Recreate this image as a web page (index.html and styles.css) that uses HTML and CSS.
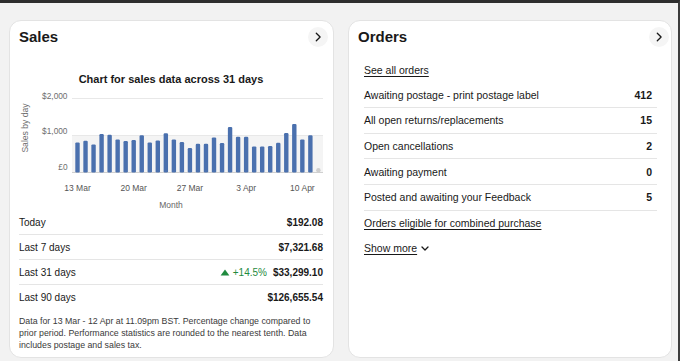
FILE: index.html
```html
<!DOCTYPE html>
<html lang="en">
<head>
<meta charset="utf-8">
<title>Seller Hub overview</title>
<link rel="stylesheet" href="styles.css">
</head>
<body>
<main class="page">
  <section class="card sales">
    <header class="card-head">
      <h2 class="card-title">Sales</h2>
      <button class="chev-btn" aria-label="Go to Sales"><svg viewBox="0 0 20 20"><path d="M8.3 6.2l3.8 3.8-3.8 3.8"/></svg></button>
    </header>
    <h3 class="chart-title">Chart for sales data across 31 days</h3>
    <svg class="chart" width="304" height="124" viewBox="0 0 304 124">
      <rect class="band" x="53" y="49" width="251" height="37"/>
      <line class="grid" x1="53" y1="12.5" x2="304" y2="12.5"/>
      <line class="grid" x1="53" y1="49.5" x2="304" y2="49.5"/>
      <line class="axis" x1="53" y1="86.5" x2="304" y2="86.5"/>
      <text class="ylab" x="48.5" y="13">$2,000</text>
      <text class="ylab" x="48.5" y="48">$1,000</text>
      <text class="ylab" x="48.5" y="84">£0</text>
      <text class="ytitle" transform="translate(9 42) rotate(-90)">Sales by day</text>
      <g class="bars">
        <rect x="56.3" y="56.4" width="4.4" height="30.1" rx="1.2"/>
        <rect x="64.33" y="54.7" width="4.4" height="31.8" rx="1.2"/>
        <rect x="72.36" y="58.4" width="4.4" height="28.1" rx="1.2"/>
        <rect x="80.39" y="48.0" width="4.4" height="38.5" rx="1.2"/>
        <rect x="88.42" y="48.7" width="4.4" height="37.8" rx="1.2"/>
        <rect x="96.45" y="53.4" width="4.4" height="33.1" rx="1.2"/>
        <rect x="104.48" y="55.1" width="4.4" height="31.4" rx="1.2"/>
        <rect x="112.51" y="54.0" width="4.4" height="32.5" rx="1.2"/>
        <rect x="120.54" y="49.3" width="4.4" height="37.2" rx="1.2"/>
        <rect x="128.57" y="56.4" width="4.4" height="30.1" rx="1.2"/>
        <rect x="136.6" y="54.4" width="4.4" height="32.1" rx="1.2"/>
        <rect x="144.63" y="47.3" width="4.4" height="39.2" rx="1.2"/>
        <rect x="152.66" y="53.4" width="4.4" height="33.1" rx="1.2"/>
        <rect x="160.69" y="56.1" width="4.4" height="30.4" rx="1.2"/>
        <rect x="168.72" y="62.1" width="4.4" height="24.4" rx="1.2"/>
        <rect x="176.75" y="57.7" width="4.4" height="28.8" rx="1.2"/>
        <rect x="184.78" y="57.7" width="4.4" height="28.8" rx="1.2"/>
        <rect x="192.81" y="51.4" width="4.4" height="35.1" rx="1.2"/>
        <rect x="200.84" y="57.1" width="4.4" height="29.4" rx="1.2"/>
        <rect x="208.87" y="40.9" width="4.4" height="45.6" rx="1.2"/>
        <rect x="216.9" y="50.7" width="4.4" height="35.8" rx="1.2"/>
        <rect x="224.93" y="50.7" width="4.4" height="35.8" rx="1.2"/>
        <rect x="232.96" y="60.4" width="4.4" height="26.1" rx="1.2"/>
        <rect x="240.99" y="60.4" width="4.4" height="26.1" rx="1.2"/>
        <rect x="249.02" y="60.1" width="4.4" height="26.4" rx="1.2"/>
        <rect x="257.05" y="56.8" width="4.4" height="29.7" rx="1.2"/>
        <rect x="265.08" y="47.0" width="4.4" height="39.5" rx="1.2"/>
        <rect x="273.11" y="37.9" width="4.4" height="48.6" rx="1.2"/>
        <rect x="281.14" y="53.4" width="4.4" height="33.1" rx="1.2"/>
        <rect x="289.17" y="49.3" width="4.4" height="37.2" rx="1.2"/>
      </g>
      <circle class="today-dot" cx="299.4" cy="84.2" r="2.2"/>
      <text class="xlab" x="58.5" y="105">13 Mar</text>
      <text class="xlab" x="114.7" y="105">20 Mar</text>
      <text class="xlab" x="170.9" y="105">27 Mar</text>
      <text class="xlab" x="227.2" y="105">3 Apr</text>
      <text class="xlab" x="283.4" y="105">10 Apr</text>
      <text class="xtitle" x="152" y="122">Month</text>
    </svg>
    <ul class="stats">
      <li class="stat"><span>Today</span><strong>$192.08</strong></li>
      <li class="stat"><span>Last 7 days</span><strong>$7,321.68</strong></li>
      <li class="stat"><span>Last 31 days</span><span class="stat-right"><span class="trend"><svg class="tri" viewBox="0 0 10 7"><path d="M5 0.4L9.4 6.6H0.6z"/></svg>+14.5%</span><strong>$33,299.10</strong></span></li>
      <li class="stat"><span>Last 90 days</span><strong>$126,655.54</strong></li>
    </ul>
    <p class="note">Data for 13 Mar - 12 Apr at 11.09pm BST. Percentage change compared to prior period. Performance statistics are rounded to the nearest tenth. Data includes postage and sales tax.</p>
  </section>

  <section class="card orders">
    <header class="card-head">
      <h2 class="card-title">Orders</h2>
      <button class="chev-btn" aria-label="Go to Orders"><svg viewBox="0 0 20 20"><path d="M8.3 6.2l3.8 3.8-3.8 3.8"/></svg></button>
    </header>
    <div class="orders-body">
      <a class="link see-all" href="#">See all orders</a>
      <ul class="order-list">
        <li class="order-row"><span>Awaiting postage - print postage label</span><strong>412</strong></li>
        <li class="order-row"><span>All open returns/replacements</span><strong>15</strong></li>
        <li class="order-row"><span>Open cancellations</span><strong>2</strong></li>
        <li class="order-row"><span>Awaiting payment</span><strong>0</strong></li>
        <li class="order-row"><span>Posted and awaiting your Feedback</span><strong>5</strong></li>
      </ul>
      <div class="plain-row"><a class="link" href="#">Orders eligible for combined purchase</a></div>
      <div class="plain-row"><a class="link show-more" href="#">Show more</a><svg class="down" viewBox="0 0 8 5"><path d="M1 1l3 3 3-3"/></svg></div>
    </div>
  </section>
</main>
</body>
</html>
```

FILE: styles.css
```css
* { box-sizing: border-box; }

html, body {
  margin: 0;
  height: 100%;
}

body {
  font-family: "Liberation Sans", Arial, sans-serif;
  color: #191919;
  background: #f2f2f2;
  border-top: 3px solid #2e2e2e;
  border-right: 2px solid #3c3c3c;
}

.page {
  height: 100%;
  display: grid;
  grid-template-columns: 325px 324px;
  column-gap: 14px;
  padding: 17px 0 3px 9px;
}

.card {
  background: #fff;
  border: 1px solid #e3e3e3;
  border-radius: 12px;
  padding: 0 10px 0 9px;
  display: flex;
  flex-direction: column;
  overflow: hidden;
}

.card-head {
  display: flex;
  align-items: center;
  justify-content: space-between;
  height: 20px;
  margin: 6px -5px 0 0;
}

.orders .card-head {
  margin-right: -8px;
}

.card-title {
  margin: 0;
  font-size: 15px;
  font-weight: 700;
  line-height: 20px;
}

.chev-btn {
  width: 20px;
  height: 20px;
  border: 0;
  border-radius: 50%;
  background: #f5f5f5;
  padding: 0;
  display: grid;
  place-items: center;
}

.chev-btn svg {
  width: 20px;
  height: 20px;
  fill: none;
  stroke: #191919;
  stroke-width: 1.3;
  stroke-linecap: round;
  stroke-linejoin: round;
}

.chart-title {
  margin: 25px 0 0;
  font-size: 11px;
  font-weight: 700;
  line-height: 14px;
  text-align: center;
}

.chart {
  display: block;
  font-family: "Liberation Sans", Arial, sans-serif;
}

.band { fill: #f4f4f4; }
.grid { stroke: #e8e8e8; stroke-width: 1; }
.axis { stroke: #d0d0d0; stroke-width: 1; }
.bars rect { fill: #4a70ae; }
.today-dot { fill: #cfcfcf; }

.ylab {
  font-size: 8.3px;
  fill: #6e6e6e;
  text-anchor: end;
}

.ytitle {
  font-size: 8.6px;
  fill: #6e6e6e;
  text-anchor: middle;
}

.xlab {
  font-size: 8.5px;
  fill: #555;
  text-anchor: middle;
}

.xtitle {
  font-size: 8.5px;
  fill: #666;
  text-anchor: middle;
}

.stats {
  list-style: none;
  margin: 0;
  padding: 0;
}

.stat {
  display: flex;
  align-items: center;
  justify-content: space-between;
  height: 25px;
  border-bottom: 1px solid #e5e5e5;
  font-size: 10px;
}

.stat:last-child { border-bottom: 0; }

.stat strong { font-weight: 700; }

.stat-right {
  display: flex;
  align-items: center;
  gap: 6px;
}

.trend {
  display: flex;
  align-items: center;
  gap: 3px;
  color: #1f8a3e;
}

.tri {
  width: 10px;
  height: 7px;
  fill: #1f8a3e;
}

.note {
  margin: 4.6px 0 0;
  font-size: 8.8px;
  line-height: 12.2px;
  color: #3a3a3a;
}

.orders-body {
  margin: 0 4px 0 6px;
  display: flex;
  flex-direction: column;
}

.link {
  color: #191919;
  text-decoration: underline;
  text-underline-offset: 2px;
  text-decoration-thickness: 1px;
}

.see-all {
  display: block;
  margin-top: 16px;
  font-size: 10.5px;
  line-height: 14px;
}

.order-list {
  list-style: none;
  margin: 5.6px 0 0;
  padding: 0;
}

.order-row {
  display: flex;
  align-items: center;
  justify-content: space-between;
  height: 25.6px;
  padding-right: 5px;
  border-bottom: 1px solid #e5e5e5;
  font-size: 10.5px;
}

.order-row strong { font-weight: 700; }

.plain-row {
  display: flex;
  align-items: center;
  gap: 4px;
  height: 25.6px;
  padding-bottom: 1px;
  font-size: 10.5px;
}

.down {
  width: 8px;
  height: 5px;
  fill: none;
  stroke: #191919;
  stroke-width: 1.3;
  stroke-linecap: round;
  stroke-linejoin: round;
}
```
